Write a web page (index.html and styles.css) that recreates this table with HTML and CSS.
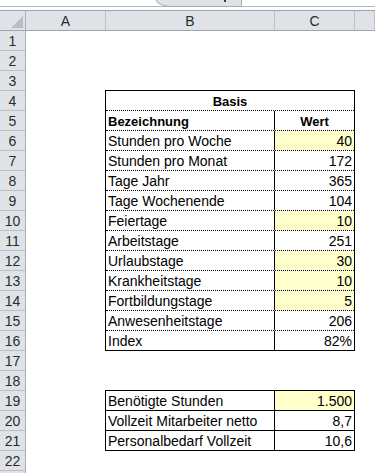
FILE: index.html
```html
<!DOCTYPE html>
<html lang="de">
<head>
<meta charset="utf-8">
<title>Personalbedarf</title>
<link rel="stylesheet" href="styles.css">
</head>
<body>
<div class="window">
  <div class="tabstrip">
    <span class="tab-label">127</span>
    <div class="tab"><span class="tab-mark"></span></div>
  </div>
  <div class="gap"></div>
  <div class="colheads">
    <div class="corner"><span class="corner-tri"></span></div>
    <div class="colhead">A</div>
    <div class="colhead">B</div>
    <div class="colhead">C</div>
    <div class="colhead"></div>
  </div>
  <div class="sheet">
    <div class="rowheads">
      <div class="rowhead">1</div>
      <div class="rowhead">2</div>
      <div class="rowhead">3</div>
      <div class="rowhead">4</div>
      <div class="rowhead">5</div>
      <div class="rowhead">6</div>
      <div class="rowhead">7</div>
      <div class="rowhead">8</div>
      <div class="rowhead">9</div>
      <div class="rowhead">10</div>
      <div class="rowhead">11</div>
      <div class="rowhead">12</div>
      <div class="rowhead">13</div>
      <div class="rowhead">14</div>
      <div class="rowhead">15</div>
      <div class="rowhead">16</div>
      <div class="rowhead">17</div>
      <div class="rowhead">18</div>
      <div class="rowhead">19</div>
      <div class="rowhead">20</div>
      <div class="rowhead">21</div>
      <div class="rowhead">22</div>
      <div class="rowhead">23</div>
    </div>
    <div class="cells">
      <div class="table basis">
        <div class="trow"><div class="tcell title">Basis</div></div>
        <div class="trow"><div class="tcell label bold">Bezeichnung</div><div class="tcell value bold center">Wert</div></div>
        <div class="trow"><div class="tcell label">Stunden pro Woche</div><div class="tcell value fill">40</div></div>
        <div class="trow"><div class="tcell label">Stunden pro Monat</div><div class="tcell value">172</div></div>
        <div class="trow"><div class="tcell label">Tage Jahr</div><div class="tcell value">365</div></div>
        <div class="trow"><div class="tcell label">Tage Wochenende</div><div class="tcell value">104</div></div>
        <div class="trow"><div class="tcell label">Feiertage</div><div class="tcell value fill">10</div></div>
        <div class="trow"><div class="tcell label">Arbeitstage</div><div class="tcell value">251</div></div>
        <div class="trow"><div class="tcell label">Urlaubstage</div><div class="tcell value fill">30</div></div>
        <div class="trow"><div class="tcell label">Krankheitstage</div><div class="tcell value fill">10</div></div>
        <div class="trow"><div class="tcell label">Fortbildungstage</div><div class="tcell value fill">5</div></div>
        <div class="trow"><div class="tcell label">Anwesenheitstage</div><div class="tcell value">206</div></div>
        <div class="trow"><div class="tcell label">Index</div><div class="tcell value">82%</div></div>
      </div>
      <div class="table summary">
        <div class="trow"><div class="tcell label">Benötigte Stunden</div><div class="tcell value fill">1.500</div></div>
        <div class="trow"><div class="tcell label">Vollzeit Mitarbeiter netto</div><div class="tcell value">8,7</div></div>
        <div class="trow"><div class="tcell label">Personalbedarf Vollzeit</div><div class="tcell value">10,6</div></div>
      </div>
    </div>
  </div>
</div>
</body>
</html>
```

FILE: styles.css
```css
html, body {
  margin: 0;
  padding: 0;
  background: #ffffff;
}

body {
  width: 375px;
  height: 473px;
  overflow: hidden;
  font-family: "Liberation Sans", Arial, sans-serif;
  font-size: 14px;
  color: #000000;
}

/* top strip with a partly visible sheet tab */
.tabstrip {
  height: 6px;
  border-bottom: 1px solid #b3b8bf;
  display: flex;
  align-items: flex-start;
}

.tab-label {
  margin-left: 62px;
  margin-top: -10px;
  font-size: 12px;
  line-height: 12px;
  color: #222222;
}

.tab {
  margin-left: 74px;
  width: 86px;
  height: 7px;
  box-sizing: border-box;
  background: #dfe2e6;
  border-left: 1px solid #a6acb4;
  border-right: 1px solid #a6acb4;
  border-bottom: 1px solid #a6acb4;
  border-bottom-left-radius: 16px 7px;
  display: flex;
  justify-content: flex-end;
}

.tab-mark {
  width: 2px;
  height: 2px;
  background: #3a3a3a;
  margin-right: 15px;
}

.gap {
  height: 3px;
}

/* column headers */
.colheads {
  display: grid;
  grid-template-columns: 26px 80px 169px 80px 1fr;
  height: 21px;
  box-sizing: border-box;
  border-top: 1px solid #9aa1aa;
  border-bottom: 1px solid #9ea6b0;
  background: #dfe3e8;
}

.colhead, .corner {
  box-sizing: border-box;
  border-right: 1px solid #bcc2ca;
  height: 19px;
  line-height: 19px;
  padding-top: 1px;
  text-align: center;
  color: #2b2b2b;
}

.corner {
  display: flex;
  justify-content: flex-end;
  align-items: flex-end;
  padding: 0 2px 2px 0;
  border-right-color: #aab1ba;
}

.corner-tri {
  width: 0;
  height: 0;
  border-left: 12px solid transparent;
  border-bottom: 12px solid #b9bec5;
}

/* sheet body */
.sheet {
  display: flex;
}

.rowheads {
  width: 26px;
  flex: none;
  box-sizing: border-box;
  border-right: 1px solid #aab1ba;
  background: #dfe3e8;
}

.rowhead {
  height: 20px;
  box-sizing: border-box;
  border-bottom: 1px solid #b8bfc8;
  line-height: 19px;
  padding-top: 1px;
  text-align: center;
  color: #2b2b2b;
}

.cells {
  flex: 1;
}

.table {
  width: 250px;
  box-sizing: border-box;
  border: 1px solid #000000;
  margin-left: 79px;
}

.basis {
  margin-top: 59px;
}

.summary {
  margin-top: 39px;
}

.trow {
  display: flex;
  height: 20px;
  box-sizing: border-box;
  border-bottom: 1px dotted #000000;
}

.summary .trow {
  border-bottom-style: solid;
}

.trow:last-child {
  height: 19px;
  border-bottom: none;
}

.tcell {
  height: 19px;
  line-height: 19px;
  padding-top: 1px;
  box-sizing: border-box;
  white-space: nowrap;
  overflow: hidden;
}

.title {
  flex: 1;
  text-align: center;
  font-weight: bold;
  font-size: 13px;
}

.label {
  width: 169px;
  flex: none;
  border-right: 1px solid #000000;
  padding-left: 2px;
}

.value {
  flex: 1;
  text-align: right;
  padding-right: 2px;
}

.bold {
  font-weight: bold;
  font-size: 13px;
}

.center {
  text-align: center;
  padding-right: 0;
}

.fill {
  background: #ffffcc;
}
```
